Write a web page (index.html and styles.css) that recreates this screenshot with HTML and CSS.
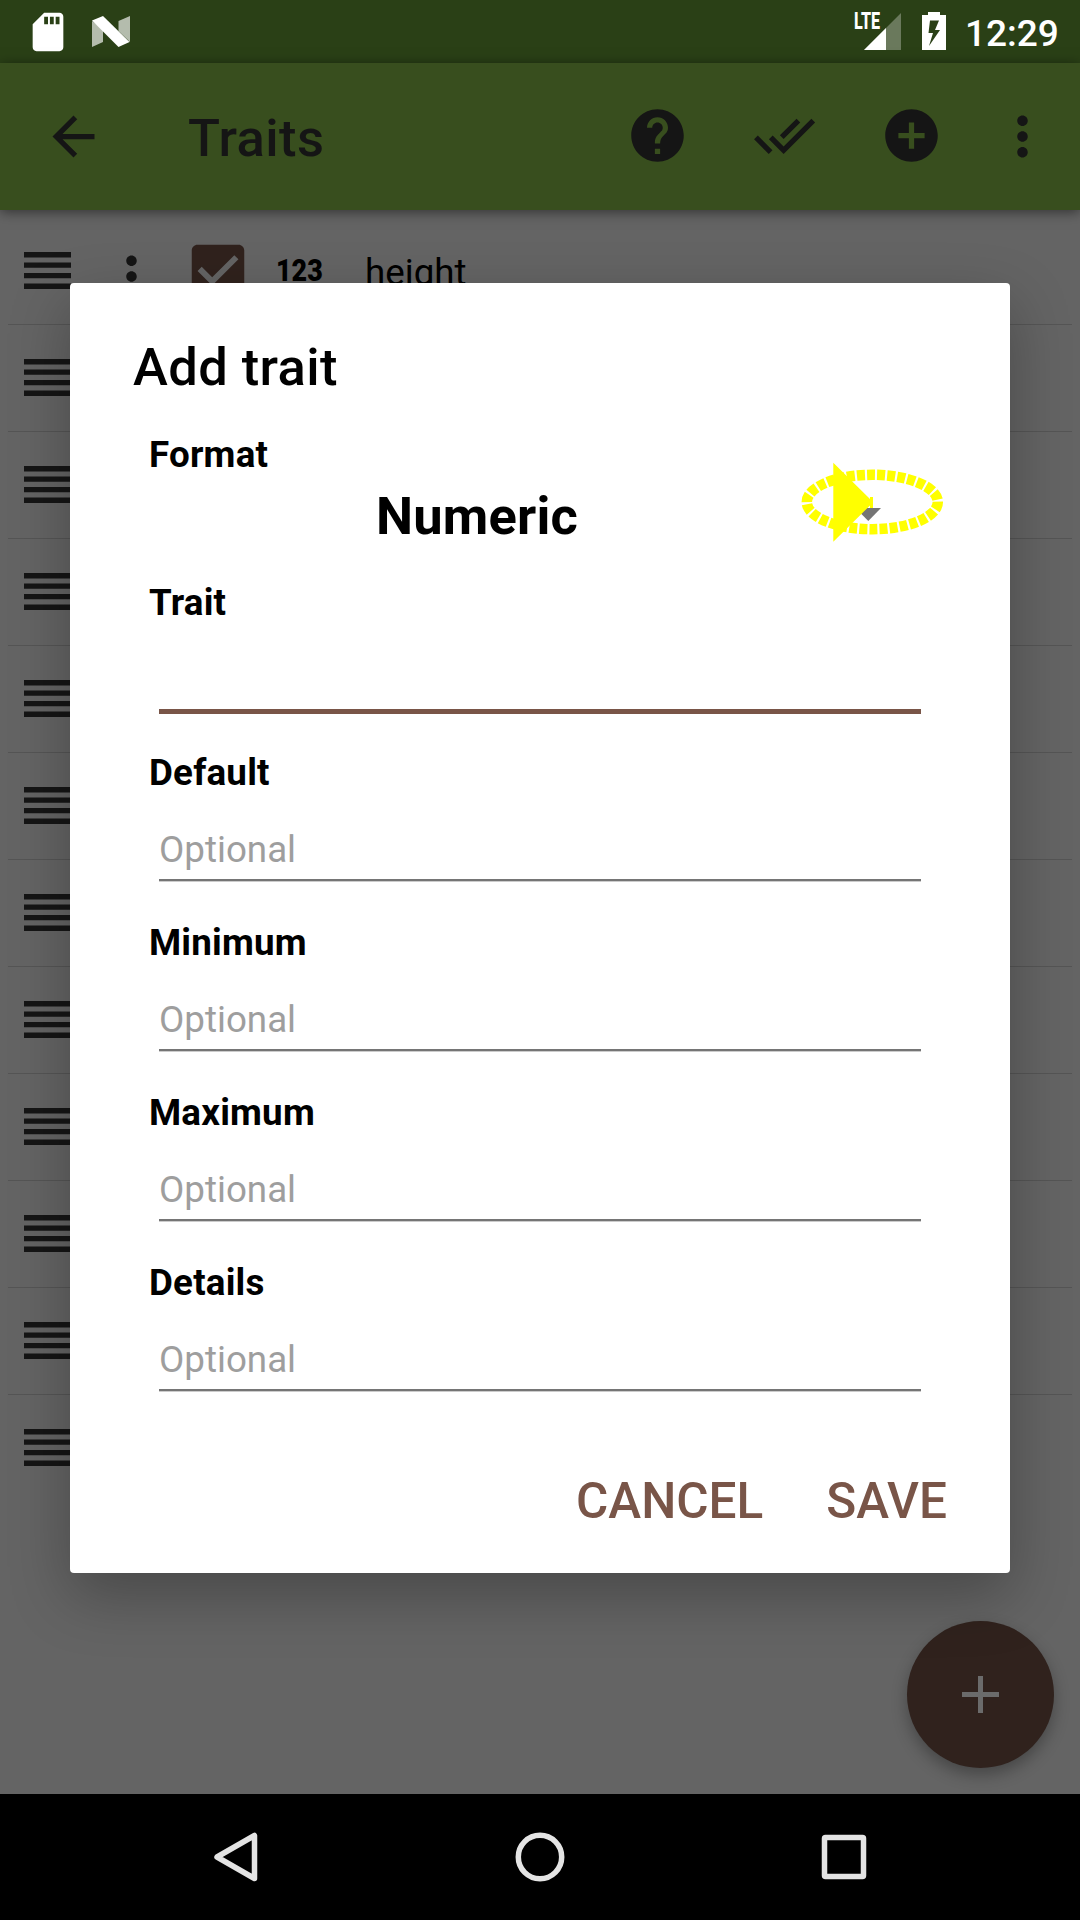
FILE: index.html
```html
<!DOCTYPE html>
<html lang="en">
<head>
<meta charset="utf-8">
<title>Traits</title>
<link rel="stylesheet" href="styles.css">
</head>
<body>
<svg class="defs" width="0" height="0">
  <symbol id="handle" viewBox="0 0 47 37"><path d="M0 0h47v5.5H0zM0 10.5h47v5.3H0zM0 21h47v5.3H0zM0 31.5h47V37H0z"/></symbol>
  <symbol id="dots" viewBox="0 0 24 24"><path d="M12 8c1.1 0 2-.9 2-2s-.9-2-2-2-2 .9-2 2 .9 2 2 2zm0 2c-1.1 0-2 .9-2 2s.9 2 2 2 2-.9 2-2-.9-2-2-2zm0 6c-1.1 0-2 .9-2 2s.9 2 2 2 2-.9 2-2-.9-2-2-2z"/></symbol>
</svg>
<div class="screen">
  <header class="status">
    <svg class="sd" viewBox="0 0 24 24"><path d="M18 2h-8L4 8v12c0 1.100.9 2 2 2h12c1.100 0 2-.9 2-2V4c0-1.100-.9-2-2-2zm-6 6h-2V4h2zm3 0h-2V4h2zm3 0h-2V4h2z"/></svg>
    <svg class="nougat" viewBox="0 0 38 31"><path opacity=".65" d="M0 5l11 8v13L0 31zM26.500 5L38 0v26L26.500 15z"/><path d="M0 4.500L11 0l26.500 26L26.500 31z"/></svg>
    <div class="signal">
      <svg viewBox="0 0 37 37"><path opacity=".3" d="M0 37L37 0v37z"/><path d="M0 37L22 15v22z"/></svg>
      <span class="lte">LTE</span>
    </div>
    <svg class="battery" viewBox="0 0 24 38"><path fill-rule="evenodd" d="M6 0h12v3h6v35H0V3h6zM8 8.500L6.500 21H11L7 34 18 18h-5l4-9.500z"/></svg>
    <span class="clock">12:29</span>
  </header>
  <nav class="appbar">
    <svg class="icon back" viewBox="0 0 24 24"><path d="M20 11H7.830l5.590-5.590L12 4l-8 8 8 8 1.410-1.410L7.830 13H20z"/></svg>
    <h1>Traits</h1>
    <svg class="icon" viewBox="0 0 24 24"><path d="M12 2C6.480 2 2 6.480 2 12s4.480 10 10 10 10-4.480 10-10S17.520 2 12 2zm1 17h-2v-2h2v2zm2.070-7.750l-.9.920C13.450 12.900 13 13.500 13 15h-2v-.5c0-1.100.45-2.100 1.170-2.830l1.240-1.260c.37-.36.59-.86.59-1.410 0-1.100-.9-2-2-2s-2 .9-2 2H8c0-2.210 1.790-4 4-4s4 1.790 4 4c0 .88-.36 1.680-.93 2.250z"/></svg>
    <svg class="icon" viewBox="0 0 24 24"><path d="M.41 13.410L6 19l1.410-1.420L1.830 12M22.240 5.580L11.660 16.170 7.500 12l-1.430 1.410L11.660 19l12-12M18 7l-1.410-1.420-6.350 6.350 1.420 1.410z"/></svg>
    <svg class="icon" viewBox="0 0 24 24"><path d="M12 2C6.480 2 2 6.480 2 12s4.480 10 10 10 10-4.480 10-10S17.520 2 12 2zm5 11h-4v4h-2v-4H7v-2h4V7h2v4h4z"/></svg>
    <svg class="icon more" viewBox="0 0 24 24"><use href="#dots"/></svg>
  </nav>
  <main class="list">
    <div class="row">
      <svg class="handle"><use href="#handle"/></svg>
      <svg class="icon rowdots"><use href="#dots"/></svg>
      <svg class="check" viewBox="0 0 24 24"><path d="M10 17l-5-5 1.410-1.420L10 14.170l7.590-7.590L19 8M19 3H5c-1.110 0-2 .89-2 2v14a2 2 0 0 0 2 2h14a2 2 0 0 0 2-2V5c0-1.110-.89-2-2-2z"/></svg>
      <span class="num">123</span>
      <span class="name">height</span>
    </div>
    <div class="row"><svg class="handle"><use href="#handle"/></svg></div>
    <div class="row"><svg class="handle"><use href="#handle"/></svg></div>
    <div class="row"><svg class="handle"><use href="#handle"/></svg></div>
    <div class="row"><svg class="handle"><use href="#handle"/></svg></div>
    <div class="row"><svg class="handle"><use href="#handle"/></svg></div>
    <div class="row"><svg class="handle"><use href="#handle"/></svg></div>
    <div class="row"><svg class="handle"><use href="#handle"/></svg></div>
    <div class="row"><svg class="handle"><use href="#handle"/></svg></div>
    <div class="row"><svg class="handle"><use href="#handle"/></svg></div>
    <div class="row"><svg class="handle"><use href="#handle"/></svg></div>
    <div class="row last"><svg class="handle"><use href="#handle"/></svg></div>
  </main>
  <footer class="navbar">
    <svg viewBox="0 0 50 50"><path d="M43.500 3.500v43L6 25z"/></svg>
    <svg viewBox="0 0 50 50"><circle cx="25" cy="25" r="21.700"/></svg>
    <svg viewBox="0 0 50 50"><rect x="5.500" y="5.500" width="39" height="39" rx="1"/></svg>
  </footer>

  <div class="fab"><svg viewBox="0 0 37 37"><path d="M16 0h5v16h16v5H21v16h-5V21H0v-5h16z"/></svg></div>

  <section class="dialog">
    <h2>Add trait</h2>
    <label>Format</label>
    <div class="spinner">Numeric</div>
    <label>Trait</label>
    <div class="field focus"></div>
    <label>Default</label>
    <div class="field">Optional</div>
    <label>Minimum</label>
    <div class="field">Optional</div>
    <label>Maximum</label>
    <div class="field">Optional</div>
    <label>Details</label>
    <div class="field">Optional</div>
    <div class="actions"><span>CANCEL</span><span>SAVE</span></div>
    <svg class="marker" viewBox="0 0 150 90">
      <path fill="#757575" d="M60.500 53H86L73.300 66z"/>
      <ellipse cx="77.300" cy="47" rx="65.500" ry="27.200"/>
      <path fill="#ff0" d="M38.300 7.700v79L75 50.500V53h3V42h-3v2z"/>
    </svg>
  </section>
</div>
</body>
</html>
```
FILE: styles.css
```css
* { box-sizing: border-box; }
body { margin: 0; font-family: Roboto, "Liberation Sans", sans-serif; }
svg { display: block; flex: none; }
.defs { position: absolute; }
h1, h2 { margin: 0; font-weight: 500; font-size: 52.5px; letter-spacing: .4px; }

.screen {
  position: relative;
  display: flex;
  flex-direction: column;
  width: 1080px;
  height: 1920px;
  overflow: hidden;
  background: #646464;
}

/* status bar */
.status {
  display: flex;
  align-items: flex-start;
  height: 63px;
  padding-left: 25px;
  background: #2a4016;
  color: #fff;
  fill: #fff;
}
.sd { width: 46px; height: 46px; margin-top: 9px; }
.nougat { width: 38px; height: 31px; margin: 16px 0 0 21px; }
.signal { position: relative; margin: 13px 0 0 734px; }
.signal svg { width: 37px; height: 37px; }
.lte {
  position: absolute;
  left: -10px;
  top: -4px;
  font-size: 23px;
  line-height: 26px;
  font-weight: 800;
  transform: scaleX(.7);
  transform-origin: left;
}
.battery { width: 24px; height: 38px; margin: 12px 0 0 21px; }
.clock { margin-left: 19px; font-size: 37px; line-height: 67px; font-weight: 500; }

/* app bar */
.appbar {
  position: relative;
  display: flex;
  align-items: center;
  gap: 64px;
  height: 147px;
  padding: 0 26px 2px 42px;
  background: #384e1e;
  color: #151515;
  box-shadow: 0 2px 12px rgba(0, 0, 0, .5);
}
.icon { width: 63px; height: 63px; fill: #151515; }
.back { margin-top: 2px; }
.appbar h1 { width: 393px; margin: 5px 0 0 19px; }
.more { margin: 2px 0 0 -16px; }

/* trait list */
.list { flex: 1; padding: 8px 8px 0; }
.row {
  display: flex;
  align-items: flex-start;
  height: 107px;
  padding: 34px 0 0 16px;
  border-bottom: 1px solid #555;
}
.last { border-bottom: 0; }
.handle { width: 47px; height: 37px; fill: #151515; }
.rowdots { margin: -7px 0 0 29px; }
.check { width: 70px; height: 70px; margin: -16px 0 0 20px; fill: #30221d; }
.num {
  width: 89px;
  margin: 0 0 0 23px;
  font-size: 32px;
  line-height: 37px;
  font-weight: 900;
  transform: scaleX(.84);
  transform-origin: left;
}
.name { font-size: 36.75px; line-height: 43px; margin-top: -1px; }

/* system navigation */
.navbar {
  display: flex;
  align-items: center;
  justify-content: center;
  gap: 254px;
  height: 126px;
  background: #000;
}
.navbar svg { width: 50px; height: 50px; fill: none; stroke: #e4e4e4; stroke-width: 5.5; stroke-linejoin: round; }

.fab {
  position: absolute;
  left: 907px;
  top: 1621px;
  display: flex;
  align-items: center;
  justify-content: center;
  width: 147px;
  height: 147px;
  border-radius: 50%;
  background: #30221d;
  box-shadow: 0 7px 16px rgba(0, 0, 0, .3);
}
.fab svg { width: 37px; height: 37px; fill: #6b6b6b; }

/* dialog */
.dialog {
  position: absolute;
  left: 70px;
  top: 283px;
  display: flex;
  flex-direction: column;
  width: 940px;
  height: 1290px;
  padding: 53px 63px 0 63px;
  border-radius: 4px;
  background: #fff;
  box-shadow: 0 22px 60px rgba(0, 0, 0, .28);
}
.dialog h2 { height: 97px; line-height: 62px; }
.dialog label { height: 43px; padding-left: 16px; font-size: 36.75px; line-height: 43px; font-weight: 700; letter-spacing: .2px; }
.spinner { height: 105px; padding-left: 243px; font-size: 52.5px; line-height: 80px; font-weight: 700; letter-spacing: .2px; }
.field {
  width: 762px;
  height: 87px;
  margin: 0 0 40px 26px;
  padding-top: 34px;
  border-bottom: 2px solid #757575;
  font-size: 36.75px;
  line-height: 43px;
  color: #9e9e9e;
  box-shadow: 0 1px #ccc;
}
.focus { height: 90px; margin-bottom: 37px; border-bottom: 5px solid #795548; box-shadow: none; }
.actions { display: flex; gap: 63px; justify-content: flex-end; padding-top: 40px; font-size: 49.5px; line-height: 60px; font-weight: 500; color: #795548; }
.marker { position: absolute; left: 725px; top: 172px; width: 150px; height: 90px; }
.marker ellipse { fill: none; stroke: #ff0; stroke-width: 10.5; stroke-dasharray: 8 2.1; }
```
